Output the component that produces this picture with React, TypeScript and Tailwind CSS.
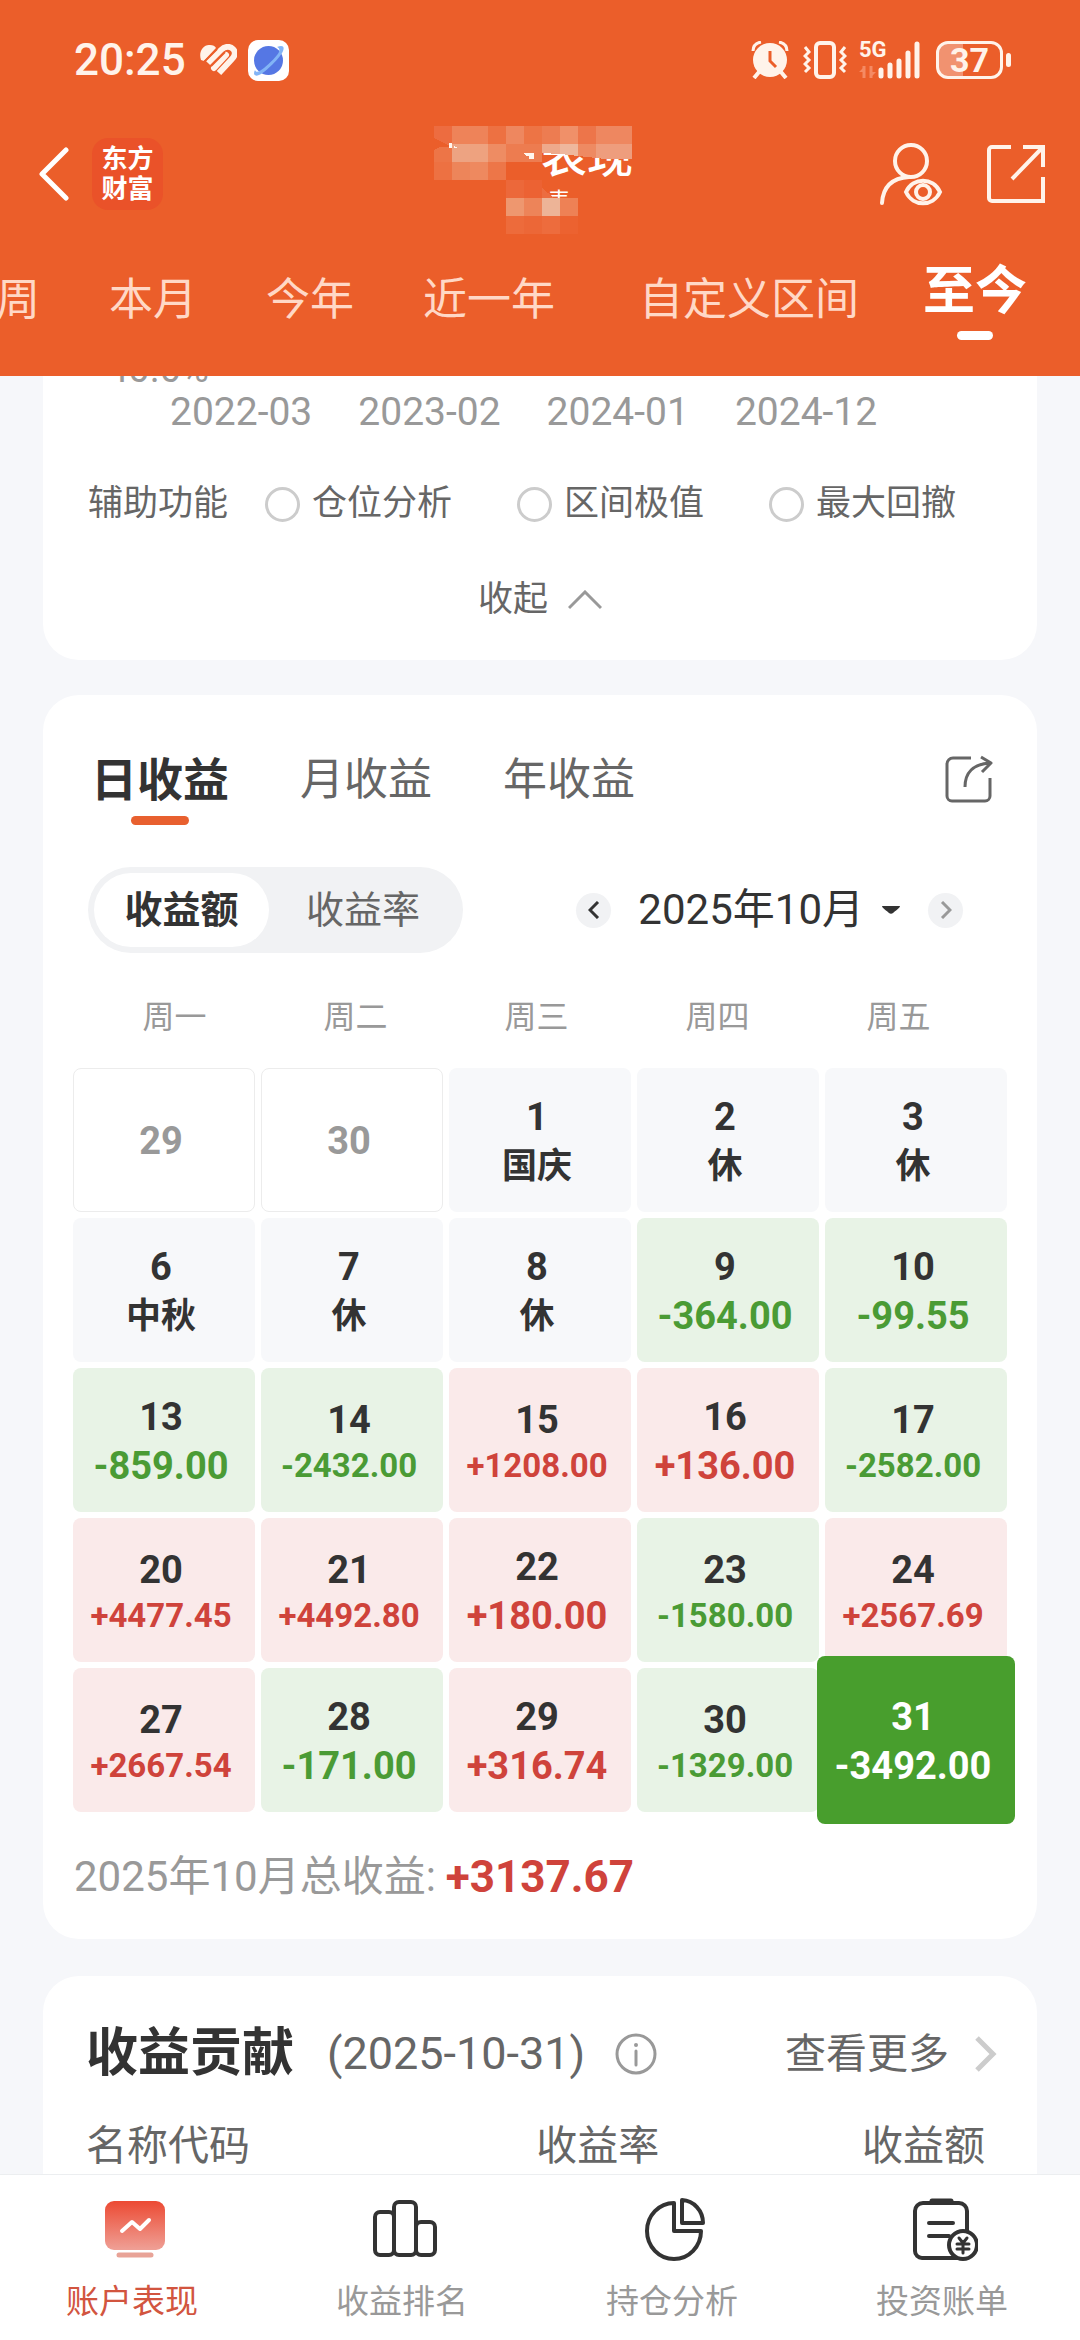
import React, { useState } from 'react';

type Tone = 'muted' | 'rest' | 'gain' | 'loss' | 'selected';

interface Day {
  day: string;
  value?: string;
  tone: Tone;
}

const PRESET_RANGES = ['近一周', '本月', '今年', '近一年'];
const AXIS_LABELS = ['2022-03', '2023-02', '2024-01', '2024-12'];
const HELPERS = ['仓位分析', '区间极值', '最大回撤'];
const PERIODS = ['日收益', '月收益', '年收益'];
const WEEKDAYS = ['周一', '周二', '周三', '周四', '周五'];

const DAYS: Day[] = [
  { day: '29', tone: 'muted' },
  { day: '30', tone: 'muted' },
  { day: '1', value: '国庆', tone: 'rest' },
  { day: '2', value: '休', tone: 'rest' },
  { day: '3', value: '休', tone: 'rest' },
  { day: '6', value: '中秋', tone: 'rest' },
  { day: '7', value: '休', tone: 'rest' },
  { day: '8', value: '休', tone: 'rest' },
  { day: '9', value: '-364.00', tone: 'loss' },
  { day: '10', value: '-99.55', tone: 'loss' },
  { day: '13', value: '-859.00', tone: 'loss' },
  { day: '14', value: '-2432.00', tone: 'loss' },
  { day: '15', value: '+1208.00', tone: 'gain' },
  { day: '16', value: '+136.00', tone: 'gain' },
  { day: '17', value: '-2582.00', tone: 'loss' },
  { day: '20', value: '+4477.45', tone: 'gain' },
  { day: '21', value: '+4492.80', tone: 'gain' },
  { day: '22', value: '+180.00', tone: 'gain' },
  { day: '23', value: '-1580.00', tone: 'loss' },
  { day: '24', value: '+2567.69', tone: 'gain' },
  { day: '27', value: '+2667.54', tone: 'gain' },
  { day: '28', value: '-171.00', tone: 'loss' },
  { day: '29', value: '+316.74', tone: 'gain' },
  { day: '30', value: '-1329.00', tone: 'loss' },
  { day: '31', value: '-3492.00', tone: 'selected' },
];

const CELL_STYLES: Record<Tone, string> = {
  muted: 'border border-[#ececec] bg-white text-[#999999]',
  rest: 'bg-[#f7f8fa] text-[#333333]',
  gain: 'bg-[#faeaea] text-[#333333]',
  loss: 'bg-[#e8f3e6] text-[#333333]',
  selected: 'relative z-10 -mx-2 -my-3 bg-[#489e2d] text-white',
};

const VALUE_STYLES: Record<Tone, string> = {
  muted: '',
  rest: 'text-[#333333]',
  gain: 'text-[#cf433b]',
  loss: 'text-[#4a9b35]',
  selected: 'text-white',
};

// Pixelated blocks that hide the account name: [x, y, width, height, colour]
const MOSAIC: [number, number, number, number, string][] = [
  [0, 0, 18, 18, '#ed6c40'],
  [18, 0, 36, 18, '#ee8359'],
  [54, 0, 18, 18, '#ed7142'],
  [72, 0, 18, 18, '#ee875f'],
  [90, 0, 18, 18, '#ed7445'],
  [108, 0, 18, 18, '#ed7c51'],
  [126, 0, 18, 18, '#f09069'],
  [144, 0, 18, 18, '#ed754a'],
  [162, 0, 36, 18, '#ee8760'],
  [0, 18, 18, 18, '#ed7547'],
  [18, 18, 18, 18, '#eda382'],
  [36, 18, 18, 18, '#eea27f'],
  [54, 18, 18, 18, '#ee8c63'],
  [72, 18, 36, 18, '#ed7c50'],
  [0, 36, 18, 18, '#ed7142'],
  [18, 36, 18, 18, '#ed855a'],
  [36, 36, 18, 18, '#ee895f'],
  [54, 36, 18, 18, '#ed7648'],
  [72, 54, 18, 18, '#ec683a'],
  [90, 54, 18, 18, '#ec6233'],
  [72, 72, 18, 18, '#ee976f'],
  [90, 72, 18, 18, '#ed8459'],
  [108, 72, 18, 18, '#edb497'],
  [126, 72, 18, 18, '#ee8155'],
  [72, 90, 18, 18, '#ed6b3b'],
  [90, 90, 18, 18, '#ec6737'],
  [108, 90, 18, 18, '#ed6c3d'],
  [126, 90, 18, 18, '#ec6230'],
];

const Mosaic: React.FC = () => (
  <svg className="absolute left-0 top-0" width="216" height="108" viewBox="0 0 216 108" shapeRendering="crispEdges" aria-hidden="true">
    {MOSAIC.map(([x, y, w, h, fill]) => (
      <rect key={`${x}-${y}`} x={x} y={y} width={w} height={h} fill={fill} />
    ))}
    <path d="M108 18h18v10l-18-1z" fill="#eea98b" />
    <path d="M126 18h18v12l-18-2z" fill="#eeb79d" />
    <path d="M144 18h18v14l-18-2z" fill="#ee8a62" />
    <path d="M162 18h36v15h-26l-10-1z" fill="#ee9d7d" />
    <path d="M0 12l18 9H6l-6 3z" fill="#eb5e2a" />
    <path d="M15 17h3v5h-3zM20 20l4 2h-4zM90 27h10v6h-5v-3h-3z" fill="#fff6ee" />
    <path d="M108 62v10h12z" fill="#ec6d40" />
  </svg>
);

const StatusBar: React.FC = () => (
  <div className="flex h-[120px] items-center justify-between pl-[74px] pr-[69px] text-[#fff3ea]">
    <div className="flex items-center">
      <span className="text-[44px] font-medium leading-[60px]">20:25</span>
      <svg className="ml-[14px]" width="37" height="32" viewBox="0 0 37 32" fill="none" aria-hidden="true">
        <path d="M1 16C-2 7 4 0 10 1c3 0 5 1 6 3L4 17z" fill="currentColor" />
        <path d="M8 19L21 6c4-4 9-4 12-1s2 7-1 10L19 29" stroke="currentColor" strokeWidth="6" />
        <path d="M14 24L26 11" stroke="currentColor" strokeWidth="6" strokeLinecap="round" />
        <path d="M4 18L17 5M11 22L25 8" stroke="#eb5e2a" strokeWidth="2" />
      </svg>
      <svg className="ml-[11px]" width="41" height="41" viewBox="0 0 41 41" aria-hidden="true">
        <rect width="41" height="41" rx="10" fill="#ffffff" />
        <circle cx="20.500" cy="20.500" r="14.500" fill="#5577e4" />
        <path d="M29 7c5-2 8-1 6 4-2 6-18 22-24 24-5 2-6-1-4-5 1 3 4 2 9-2 6-5 13-12 15-16 1-3 0-4-2-5z" fill="#82b4f6" />
      </svg>
    </div>
    <div className="flex items-center">
      <svg width="38" height="38" viewBox="0 0 38 38" fill="none" stroke="currentColor" aria-hidden="true">
        <circle cx="19" cy="19" r="17" fill="currentColor" stroke="none" />
        <path d="M2 10c0-5 3-8 8-9M36 10c0-5-3-8-8-9" strokeWidth="3" />
        <path d="M8 31l-5 6M30 31l5 6" strokeWidth="4" />
        <path d="M19 10v10l6 6" stroke="#eb5e2a" strokeWidth="3" />
      </svg>
      <svg className="ml-[14px]" width="44" height="38" viewBox="0 0 44 38" fill="none" stroke="currentColor" aria-hidden="true">
        <rect x="13" y="2" width="18" height="34" rx="4" strokeWidth="4" />
        <path d="M2 6l4 5-4 4 4 4-4 4 4 4-4 4M42 6l-4 5 4 4-4 4 4 4-4 4 4 4" strokeWidth="3" />
      </svg>
      <div className="relative ml-3 h-[38px] w-[62px]">
        <span className="absolute left-0 top-0 text-[22px] font-bold leading-[18px]">5G</span>
        <svg width="62" height="38" viewBox="0 0 62 38" aria-hidden="true">
          <path d="M5 25v12M12 25v12" stroke="#f58a63" strokeWidth="3" />
          <path d="M0 31l6-6v6zM17 31l-6 6v-6z" fill="#f58a63" />
          <path d="M22 29v6M31 24v11M40 20v15M49 12v23M58 3v32" stroke="currentColor" strokeWidth="5" strokeLinecap="round" />
        </svg>
      </div>
      <div className="ml-[15px] flex items-center gap-[3px]">
        <div className="flex h-[38px] w-[67px] items-center justify-center rounded-xl border-[3px] border-[#fff3ea] bg-linear-to-r from-[#f19270] from-40% to-transparent to-40% text-[34px] font-bold leading-[32px]">
          37
        </div>
        <div className="h-[14px] w-[5px] rounded-full bg-[#fff3ea]" />
      </div>
    </div>
  </div>
);

const Header: React.FC = () => (
  <header className="shrink-0 bg-[#eb5e2a]">
    <StatusBar />
    <div className="grid grid-cols-[1fr_auto_1fr] items-center pl-[39px] pr-[35px] pt-[6px]">
      <div className="flex items-center gap-[23px]">
        <button aria-label="返回">
          <svg width="30" height="54" viewBox="0 0 30 54" fill="none" stroke="#ffffff" strokeWidth="5" strokeLinecap="round" strokeLinejoin="round">
            <path d="M27 3L3 27l24 24" />
          </svg>
        </button>
        <div className="flex h-[72px] w-[71px] flex-col items-center justify-center rounded-2xl bg-[#ea5229] text-[26px] font-bold leading-[30px] text-white">
          <span>东方</span>
          <span>财富</span>
        </div>
      </div>
      <div className="relative h-24 w-[216px] text-white">
        <h1 className="pr-[17px] text-right text-[46px] font-medium leading-[60px]">表现</h1>
        <p className="pl-[34px] text-center text-[22px] leading-[30px]">表</p>
        <Mosaic />
      </div>
      <div className="flex items-center justify-end gap-[44px]">
        <button aria-label="访客查看">
          <svg width="64" height="64" viewBox="0 0 64 64" fill="none" stroke="#fff3ea" strokeWidth="4" strokeLinecap="round">
            <circle cx="32" cy="19" r="16" />
            <path d="M3 61c1-16 10-25 27-26" />
            <path d="M27 50c7-15 27-15 34 0-7 15-27 15-34 0z" />
            <circle cx="44" cy="50" r="7" />
          </svg>
        </button>
        <button aria-label="分享">
          <svg width="58" height="60" viewBox="0 0 58 60" fill="none" stroke="#fff3ea" strokeWidth="4">
            <path d="M24 3H5a3 3 0 0 0-3 3v48a3 3 0 0 0 3 3h51V33M36 3h20v20M56 3L25 35" />
          </svg>
        </button>
      </div>
    </div>
    <nav className="flex h-[154px] items-start justify-end gap-16 overflow-hidden whitespace-nowrap pr-[53px] pt-[38px] text-[44px] leading-[80px] text-[#ffd8c6]">
      <div className="flex gap-[69px] pr-5">
        {PRESET_RANGES.map((label) => (
          <button key={label}>{label}</button>
        ))}
      </div>
      <button>自定义区间</button>
      <button className="flex flex-col items-center text-[52px] font-bold leading-[64px] text-white">
        至今
        <span className="mt-[7px] h-[9px] w-9 rounded-full bg-white" />
      </button>
    </nav>
  </header>
);

const ChartFooterCard: React.FC = () => (
  <section className="-mt-[26px] rounded-b-[36px] bg-white pb-[35px] text-[#666666]">
    <div className="pl-16 text-[38px] leading-[38px] text-[#999999]">40.0%</div>
    <div className="mt-[2px] flex gap-[46px] pl-[127px] text-[39px] leading-[44px] text-[#999999]">
      {AXIS_LABELS.map((label) => (
        <span key={label}>{label}</span>
      ))}
    </div>
    <div className="mt-[45px] flex items-center pl-[45px] text-[35px] leading-[50px]">
      <span className="mr-[37px]">辅助功能</span>
      <div className="flex gap-[65px]">
        {HELPERS.map((label) => (
          <label key={label} className="flex items-center gap-3">
            <input type="radio" name="helper" className="size-[35px] appearance-none rounded-full border-[3px] border-[#cccccc] checked:border-[#eb5e2a]" />
            {label}
          </label>
        ))}
      </div>
    </div>
    <button className="mx-auto mt-[46px] flex items-center gap-5 text-[35px] leading-[50px]">
      收起
      <svg width="34" height="20" viewBox="0 0 34 20" fill="none" stroke="#999999" strokeWidth="3">
        <path d="M1 18L17 2l16 16" />
      </svg>
    </button>
  </section>
);

const DayCell: React.FC<{ item: Day }> = ({ item }) => {
  const { day, value, tone } = item;
  // Four-digit amounts step down a size so they stay inside the cell
  const compact = value !== undefined && value.length > 7 && tone !== 'selected';
  const valueSize = tone === 'rest' ? 'text-[35px] leading-[49px]' : compact ? 'text-[33px] leading-[42px]' : 'text-[38px] leading-[49px]';

  return (
    <button className={`flex flex-col items-center justify-center rounded-lg pr-[6px] pt-[3px] font-bold ${CELL_STYLES[tone]}`}>
      <span className="text-[38px] leading-[49px]">{day}</span>
      {value && <span className={`${valueSize} ${VALUE_STYLES[tone]}`}>{value}</span>}
    </button>
  );
};

const CalendarCard: React.FC = () => {
  const [period, setPeriod] = useState('日收益');
  const [metric, setMetric] = useState('收益额');

  return (
    <section className="mt-[35px] rounded-[36px] bg-white pb-8 pt-[55px]">
      <div className="flex items-start justify-between pl-12 pr-11">
        <div className="flex h-[75px] items-start gap-[71px] leading-[60px]">
          {PERIODS.map((label) => (
            <button
              key={label}
              onClick={() => setPeriod(label)}
              className={`flex flex-col items-center ${period === label ? 'text-[46px] font-bold text-[#333333]' : 'text-[44px] text-[#666666]'}`}
            >
              {label}
              {period === label && <span className="mt-[6px] h-[9px] w-[58px] rounded-full bg-[#e8602f]" />}
            </button>
          ))}
        </div>
        <button className="flex h-[58px] items-center" aria-label="分享收益">
          <svg width="48" height="48" viewBox="0 0 48 48" fill="none" stroke="#666666" strokeWidth="3">
            <path d="M26 3H8a6 6 0 0 0-6 6v32a5 5 0 0 0 5 5h33a5 5 0 0 0 5-5V23" />
            <path d="M20 32c0-14 8-23 25-24M36 2l10 6-9 9" strokeLinejoin="round" />
          </svg>
        </button>
      </div>

      <div className="mt-[42px] flex items-center justify-between pl-[45px] pr-[74px]">
        <div className="grid h-[86px] w-[375px] grid-cols-[175px_1fr] rounded-full bg-[#f1f2f4] p-[6px] text-[38px]">
          {['收益额', '收益率'].map((label) => (
            <button
              key={label}
              onClick={() => setMetric(label)}
              className={`rounded-full ${metric === label ? 'bg-white font-bold text-[#333333]' : 'text-[#666666]'}`}
            >
              {label}
            </button>
          ))}
        </div>
        <div className="flex items-center text-[#333333]">
          <button className="flex size-[35px] items-center justify-center rounded-full bg-[#f1f2f4]" aria-label="上个月">
            <svg width="12" height="18" viewBox="0 0 12 18" fill="none" stroke="#333333" strokeWidth="3">
              <path d="M10 1L2 9l8 8" />
            </svg>
          </button>
          <button className="mx-[27px] flex items-center gap-[17px] text-[42px] leading-[60px]">
            2025年10月
            <svg width="20" height="10" viewBox="0 0 20 10" fill="#333333">
              <path d="M1 1h18c0 2-5 5-7 7-1 1-3 1-4 0-2-2-7-5-7-7z" />
            </svg>
          </button>
          <button className="flex size-[35px] items-center justify-center rounded-full bg-[#f1f2f4]" aria-label="下个月">
            <svg width="12" height="18" viewBox="0 0 12 18" fill="none" stroke="#999999" strokeWidth="3">
              <path d="M2 1l8 8-8 8" />
            </svg>
          </button>
        </div>
      </div>

      <div className="mt-11 grid grid-cols-5 pl-[41px] pr-12 text-center text-[32px] leading-[40px] text-[#999999]">
        {WEEKDAYS.map((label) => (
          <span key={label}>{label}</span>
        ))}
      </div>
      <div className="mt-[31px] grid auto-rows-[144px] grid-cols-5 gap-[6px] px-[30px]">
        {DAYS.map((item, index) => (
          <DayCell key={index} item={item} />
        ))}
      </div>

      <p className="mt-[35px] flex items-center gap-[10px] pl-[31px] text-[42px] leading-[60px] text-[#999999]">
        2025年10月总收益:
        <strong className="text-[44px] font-bold text-[#cf433b]">+3137.67</strong>
      </p>
    </section>
  );
};

const ContributionCard: React.FC = () => (
  <section className="mt-[37px] rounded-t-[36px] bg-white pb-16 pt-12 text-[#666666]">
    <div className="flex items-center justify-between pl-[43px] pr-10 leading-[60px]">
      <div className="flex items-center">
        <h2 className="text-[52px] font-bold text-[#333333]">收益贡献</h2>
        <span className="ml-[33px] text-[45px]">(2025-10-31)</span>
        <button className="ml-[30px]" aria-label="说明">
          <svg width="42" height="42" viewBox="0 0 42 42" fill="none" stroke="#999999" strokeWidth="3">
            <circle cx="21" cy="21" r="19" />
            <path d="M21 18v14" strokeLinecap="round" />
            <circle cx="21" cy="12" r="2" fill="#999999" stroke="none" />
          </svg>
        </button>
      </div>
      <a href="#more" className="flex items-center gap-[26px] text-[41px]">
        查看更多
        <svg width="22" height="36" viewBox="0 0 22 36" fill="none" stroke="#cccccc" strokeWidth="5">
          <path d="M2 2l16 16L2 34" />
        </svg>
      </a>
    </div>
    <table className="mt-8 w-full text-[41px] leading-[60px]">
      <thead>
        <tr>
          <th className="w-[33%] pl-[43px] text-left font-normal">名称代码</th>
          <th className="text-right font-normal">收益率</th>
          <th className="w-[38%] pr-[52px] text-right font-normal">收益额</th>
        </tr>
      </thead>
    </table>
  </section>
);

const ICON_PROPS = { width: 66, height: 66, viewBox: '0 0 66 66', fill: 'none', stroke: '#333333', strokeWidth: 4 };

const BOTTOM_TABS = [
  {
    label: '账户表现',
    icon: (
      <svg {...ICON_PROPS}>
        <defs>
          <linearGradient id="screen" x1="0" y1="0" x2="0" y2="1">
            <stop offset="0" stopColor="#ec4a33" />
            <stop offset="1" stopColor="#efa096" />
          </linearGradient>
        </defs>
        <rect x="3" y="4" width="60" height="49" rx="9" fill="url(#screen)" stroke="none" />
        <path d="M20 34l10-9 8 7 9-9" stroke="#ffffff" strokeLinecap="round" strokeLinejoin="round" />
        <path d="M17 58h32" stroke="#e8a397" strokeWidth="5" strokeLinecap="round" />
      </svg>
    ),
  },
  {
    label: '收益排名',
    icon: (
      <svg {...ICON_PROPS}>
        <rect x="3" y="15" width="19" height="43" rx="5" />
        <rect x="22" y="5" width="22" height="53" rx="5" />
        <rect x="44" y="25" width="19" height="33" rx="5" />
      </svg>
    ),
  },
  {
    label: '持仓分析',
    icon: (
      <svg {...ICON_PROPS} strokeLinejoin="round">
        <path d="M32 6a27 28 0 1 0 27 28H32z" />
        <path d="M40 3a22 23 0 0 1 21 23H40z" />
      </svg>
    ),
  },
  {
    label: '投资账单',
    icon: (
      <svg {...ICON_PROPS} strokeLinecap="round">
        <path d="M55 34V14a8 8 0 0 0-8-8H11a8 8 0 0 0-8 8v40a7 7 0 0 0 7 7h40" />
        <path d="M20 4h19" strokeWidth="5" />
        <path d="M17 26h24M17 39h20" />
        <circle cx="51" cy="48" r="14" fill="#ffffff" />
        <path d="M47 41l4 5 4-5M51 46v10M45 47h12M45 52h12" strokeWidth="3" />
      </svg>
    ),
  },
];

const App: React.FC = () => {
  const [activeTab, setActiveTab] = useState('账户表现');

  return (
    <div className="flex h-screen flex-col bg-[#f6f7fa] font-[Roboto,'Noto_Sans_CJK_SC',sans-serif]">
      <Header />
      <main className="min-h-0 flex-1 overflow-hidden px-[43px]">
        <ChartFooterCard />
        <CalendarCard />
        <ContributionCard />
      </main>
      <nav className="grid h-[166px] shrink-0 grid-cols-4 border-t border-[#eceef0] bg-white">
        {BOTTOM_TABS.map(({ label, icon }) => (
          <button
            key={label}
            onClick={() => setActiveTab(label)}
            className={`flex flex-col items-center pt-[22px] text-[33px] leading-[40px] ${activeTab === label ? 'text-[#d2553f]' : 'text-[#999999]'}`}
          >
            {icon}
            <span className="mt-[19px] pr-[6px]">{label}</span>
          </button>
        ))}
      </nav>
    </div>
  );
};

export default App;
